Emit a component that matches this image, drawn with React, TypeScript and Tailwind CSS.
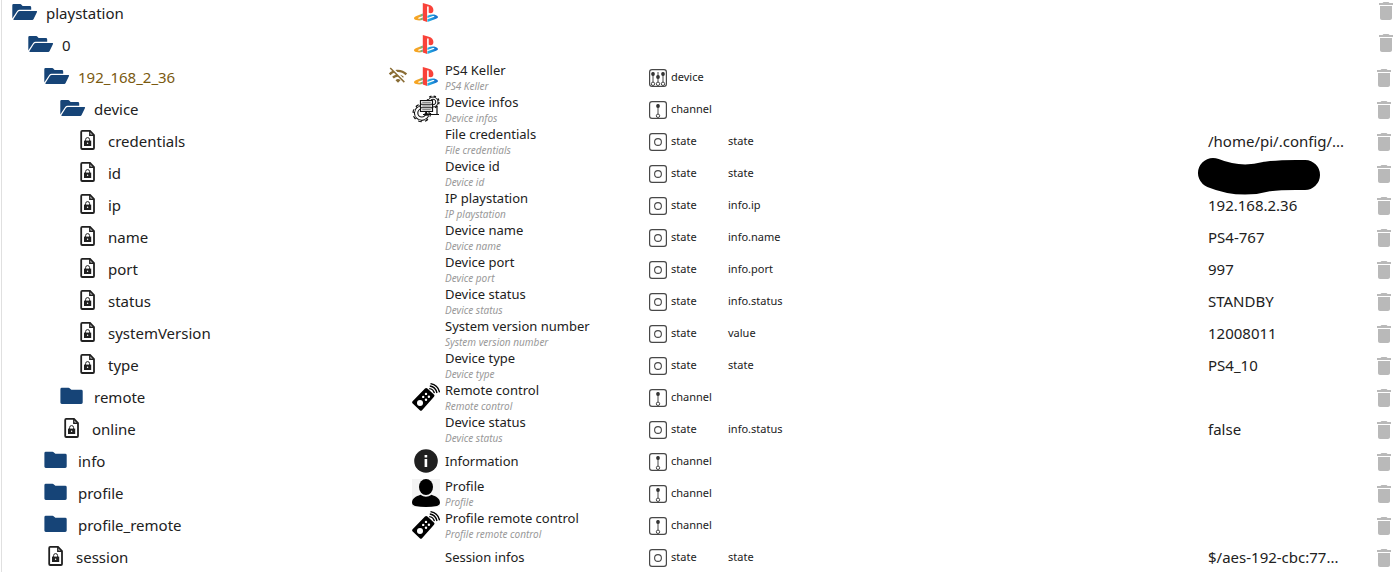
import React from 'react';
import { MdDelete, MdWifiOff } from 'react-icons/md';

type Kind = 'open' | 'closed' | 'state';
type ItemType = 'device' | 'channel' | 'state';
type Picture = 'playstation' | 'gears' | 'remote' | 'info' | 'profile';

interface Row {
  id: string;
  level: number;
  kind: Kind;
  picture?: Picture;
  offline?: boolean;
  name?: string;
  desc?: boolean;
  type?: ItemType;
  role?: string;
  value?: string;
  redacted?: boolean;
}

const rows: Row[] = [
  { id: 'playstation', level: 0, kind: 'open', picture: 'playstation' },
  { id: '0', level: 1, kind: 'open', picture: 'playstation' },
  { id: '192_168_2_36', level: 2, kind: 'open', picture: 'playstation', offline: true, name: 'PS4 Keller', desc: true, type: 'device' },
  { id: 'device', level: 3, kind: 'open', picture: 'gears', name: 'Device infos', desc: true, type: 'channel' },
  { id: 'credentials', level: 4, kind: 'state', name: 'File credentials', desc: true, type: 'state', role: 'state', value: '/home/pi/.config/...' },
  { id: 'id', level: 4, kind: 'state', name: 'Device id', desc: true, type: 'state', role: 'state', redacted: true },
  { id: 'ip', level: 4, kind: 'state', name: 'IP playstation', desc: true, type: 'state', role: 'info.ip', value: '192.168.2.36' },
  { id: 'name', level: 4, kind: 'state', name: 'Device name', desc: true, type: 'state', role: 'info.name', value: 'PS4-767' },
  { id: 'port', level: 4, kind: 'state', name: 'Device port', desc: true, type: 'state', role: 'info.port', value: '997' },
  { id: 'status', level: 4, kind: 'state', name: 'Device status', desc: true, type: 'state', role: 'info.status', value: 'STANDBY' },
  { id: 'systemVersion', level: 4, kind: 'state', name: 'System version number', desc: true, type: 'state', role: 'value', value: '12008011' },
  { id: 'type', level: 4, kind: 'state', name: 'Device type', desc: true, type: 'state', role: 'state', value: 'PS4_10' },
  { id: 'remote', level: 3, kind: 'closed', picture: 'remote', name: 'Remote control', desc: true, type: 'channel' },
  { id: 'online', level: 3, kind: 'state', name: 'Device status', desc: true, type: 'state', role: 'info.status', value: 'false' },
  { id: 'info', level: 2, kind: 'closed', picture: 'info', name: 'Information', type: 'channel' },
  { id: 'profile', level: 2, kind: 'closed', picture: 'profile', name: 'Profile', desc: true, type: 'channel' },
  { id: 'profile_remote', level: 2, kind: 'closed', picture: 'remote', name: 'Profile remote control', desc: true, type: 'channel' },
  { id: 'session', level: 2, kind: 'state', name: 'Session infos', type: 'state', role: 'state', value: '$/aes-192-cbc:77...' },
];

const indents = ['pl-3', 'pl-7', 'pl-11', 'pl-[60px]', 'pl-[76px]'];

function TreeIcon({ kind }: { kind: Kind }) {
  if (kind === 'open') {
    return (
      <svg width="26" height="18" viewBox="0 0 26 18" className="mb-0.5 shrink-0 text-[#164477]" fill="currentColor" aria-hidden="true">
        <path d="M0.3 15.5V2.2Q0.3 1 1.5 1H8.2Q9 1 9.5 1.7L10.6 3H17.8Q19.2 3 19.2 4.4V6.8H7.6Q6 6.8 5.2 8Z" />
        <path d="M7.8 8H24.3Q25.5 8 25 9.1L21.6 16.1Q21.2 17 20.2 17H2Q0.9 17 1.5 15.9L5.9 9Q6.6 8 7.8 8Z" />
      </svg>
    );
  }
  if (kind === 'closed') {
    return (
      <svg width="26" height="18" viewBox="0 0 26 18" className="mb-0.5 shrink-0 text-[#164477]" fill="currentColor" aria-hidden="true">
        <path d="M1.8 0.8H8.5Q9.3 0.8 9.9 1.4L11.4 2.8H21.2Q22.7 2.8 22.7 4.2V15.6Q22.7 17 21.2 17H1.8Q0.4 17 0.4 15.6V2.2Q0.4 0.8 1.8 0.8Z" />
      </svg>
    );
  }
  return (
    <svg width="16" height="22" viewBox="0 0 16 22" className="mr-0.5 mb-0.5 ml-1 shrink-0 text-[#202020]" fill="none" stroke="currentColor" aria-hidden="true">
      <path d="M2.2 1.9H10L14 6V19Q14 20 13 20H2.2Q1.2 20 1.2 19V2.9Q1.2 1.9 2.2 1.9Z" strokeWidth="1.8" />
      <path d="M9.8 2V6.2H14" strokeWidth="1.4" />
      <path d="M5.6 12V10.6A2 2 0 0 1 9.6 10.6V12" strokeWidth="1" />
      <path d="M4 11.6H11.2V17H4Z" fill="currentColor" stroke="none" />
      <circle cx="7.6" cy="14.2" r="0.7" fill="white" stroke="none" />
    </svg>
  );
}

function PictureIcon({ picture }: { picture: Picture }) {
  switch (picture) {
    case 'playstation':
      return (
        <svg width="28" height="28" viewBox="0 0 28 28" aria-hidden="true">
          <defs>
            <linearGradient id="psLeft" x1="0" x2="1">
              <stop offset="0" stopColor="#f9a51e" />
              <stop offset="0.6" stopColor="#f2a52a" />
              <stop offset="1" stopColor="#3ab59c" />
            </linearGradient>
            <linearGradient id="psRight" x1="0" x2="1">
              <stop offset="0" stopColor="#22b8e8" />
              <stop offset="1" stopColor="#1668c8" />
            </linearGradient>
          </defs>
          <path d="M10.8 14.4L4.4 16.9C1.4 18.1 1.2 20.1 4.2 21C6.6 21.7 8.9 21.5 10.8 20.8V18.6L8 19.5C6.4 20 5.2 19.4 6.8 18.6L10.8 17Z" fill="url(#psLeft)" />
          <path d="M15.4 16.8C18.3 15.6 21.3 15.2 23.6 16C26.7 17.1 26.6 18.8 24.2 19.7L15.4 22.9V20.3L21.8 17.9C23.2 17.4 22 16.8 20.7 17.1L15.4 19Z" fill="url(#psRight)" />
          <path d="M10.8 4.1L16.8 5.7C19.9 6.6 21.4 8.4 21.4 11C21.4 14 19.3 15 16.7 13.8V8.5C16.7 7.1 15.1 6.9 15.1 8.3V23L10.8 21.6Z" fill="#f94239" />
        </svg>
      );
    case 'gears':
      return (
        <svg width="28" height="28" viewBox="0 0 28 28" fill="none" stroke="#111" aria-hidden="true">
          <circle cx="9.8" cy="18" r="7.4" strokeWidth="1.1" />
          <circle cx="9.8" cy="18" r="8.5" strokeWidth="1.7" strokeDasharray="3.4 3.28" />
          <circle cx="9.8" cy="18" r="7.8" stroke="white" strokeWidth="1" strokeDasharray="2 4.13" strokeDashoffset="-1.2" />
          <circle cx="9.8" cy="18" r="4" strokeWidth="1.1" />
          <circle cx="21" cy="7" r="5" strokeWidth="1" />
          <circle cx="21" cy="7" r="6" strokeWidth="1.3" strokeDasharray="2.4 2.31" />
          <circle cx="21" cy="7" r="2.8" strokeWidth="1" />
          <path d="M8.5 5.5H20.5V16.5H8.5Z" fill="white" strokeWidth="1.2" />
          <path d="M8.5 9.2H20.5M8.5 12.8H20.5" strokeWidth="1.1" />
          <path d="M10.2 7.3H18.8M10.2 11H18.8M10.2 14.7H18.8" strokeWidth="1.1" stroke="#666" />
          <path d="M14.5 16.5V19.5M11 19.5H25V10.5M22.5 19.5H27" strokeWidth="1.2" />
          <path d="M12.5 18.3H16.5V20.7H12.5Z" fill="#111" stroke="none" />
        </svg>
      );
    case 'remote':
      return (
        <svg width="28" height="28" viewBox="0 0 28 28" aria-hidden="true">
          <path d="M13 5.5Q14.2 4.4 15.4 5.5L21.9 11.5Q23 12.5 22 13.7L10 27.2Q9 28.4 7.8 27.3L.7 20.6Q-.4 19.5.6 18.3Z" fill="black" />
          <circle cx="8" cy="20" r="3" fill="white" />
          <g fill="white">
            <circle cx="14" cy="10.9" r="1.2" />
            <circle cx="11.2" cy="13.9" r="1.2" />
            <circle cx="16.9" cy="13.7" r="1.2" />
            <circle cx="14" cy="16.7" r="1.2" />
          </g>
          <path d="M17.2 5.6Q21.3 5.8 22.4 10.2M17.8 3Q23.6 3.8 25 10M18.5.6Q26 1.8 27.6 9.4" fill="none" stroke="black" strokeWidth="1.3" />
        </svg>
      );
    case 'info':
      return (
        <svg width="28" height="28" viewBox="0 0 28 28" aria-hidden="true">
          <circle cx="14" cy="14" r="11.8" fill="#202020" />
          <path d="M12.6 8H15.2V10.6H12.6ZM12.6 12H15.2V20H12.6Z" fill="white" />
        </svg>
      );
    case 'profile':
      return (
        <svg width="28" height="28" viewBox="0 0 28 28" aria-hidden="true">
          <path d="M0 0H28V28H0Z" fill="#f3f3f3" />
          <ellipse cx="14" cy="8" rx="7" ry="8" fill="black" />
          <path d="M0 24C0 19 4 17.6 8.5 15.8Q14 19.8 19.5 15.8C24 17.6 28 19 28 24Q28 26 25 27Q14 29 3 27Q0 26 0 24Z" fill="black" />
        </svg>
      );
  }
}

function TypeIcon({ type }: { type: ItemType }) {
  const slider = (x: number, y: number) => (
    <g key={x}>
      <path d={`M${x} 3V14`} strokeWidth="1" />
      <circle cx={x} cy={y} r="1.9" fill="#333" stroke="none" />
      <circle cx={x} cy="14.8" r="1.7" fill="white" strokeWidth="1" />
    </g>
  );
  return (
    <svg width="18" height="18" viewBox="0 0 18 18" fill="none" stroke="#484848" className="mt-0.5 shrink-0" aria-hidden="true">
      <rect x="0.6" y="0.6" width="16.8" height="16.8" rx="2.4" strokeWidth="1.2" />
      {type === 'state' && <circle cx="9" cy="9" r="3.4" strokeWidth="1.1" />}
      {type === 'channel' && slider(9, 5)}
      {type === 'device' && [slider(4, 5), slider(9, 8), slider(14, 5)]}
    </svg>
  );
}

export default function App() {
  return (
    <main className="h-screen overflow-hidden bg-white pl-px font-['Noto_Sans',sans-serif] text-[#212121]">
      <div className="border-l border-[#e0e0e0]">
        <table className="-mt-[3px] w-full table-fixed border-collapse text-left">
          <colgroup>
            <col className="w-[386px]" />
            <col className="w-[261px]" />
            <col className="w-[79px]" />
            <col />
            <col className="w-[164px]" />
            <col className="w-[26px]" />
          </colgroup>
          <tbody>
            {rows.map((row, i) => (
              <tr key={row.id} className="h-8">
                <td className="p-0">
                  <div className={`-ml-0.5 flex h-8 items-center ${indents[row.level]}`}>
                    <TreeIcon kind={row.kind} />
                    <span className={`text-[15px] leading-5 ${row.kind === 'state' ? 'pl-2.5' : 'pl-2'} ${row.offline ? 'text-[#7a5a10]' : ''}`}>{row.id}</span>
                  </div>
                </td>
                <td className="p-0">
                  <div className="flex h-8 items-center">
                    <div className="flex w-6 shrink-0 pb-0.5">
                      {row.offline && <MdWifiOff size={20} className="text-[#8a6d35]" aria-label="Offline" />}
                    </div>
                    <div className="mr-[5px] w-7 shrink-0">{row.picture && <PictureIcon picture={row.picture} />}</div>
                    <div className="whitespace-nowrap">
                      <div className="text-[13px] leading-[18px]">{row.name}</div>
                      {row.desc && <div className="text-[10px] leading-[14px] text-[#999999] italic">{row.name}</div>}
                    </div>
                  </div>
                </td>
                <td className="p-0">
                  {row.type && (
                    <div className="flex h-8 items-center gap-1 text-[11px]">
                      <TypeIcon type={row.type} />
                      {row.type}
                    </div>
                  )}
                </td>
                <td className="p-0 text-[11px]">{row.role}</td>
                <td className="p-0 text-[15px] leading-5 whitespace-nowrap">
                  {row.redacted ? (
                    <svg width="124" height="32" viewBox="0 0 124 32" className="-ml-[11px] overflow-visible" aria-label="Hidden value">
                      <path d="M16 16Q43 27 70 19.5Q84 17.5 108 18" fill="none" stroke="black" strokeWidth="30" strokeLinecap="round" />
                    </svg>
                  ) : (
                    row.value
                  )}
                </td>
                <td className="p-0">
                  <button type="button" aria-label={`Delete ${row.id}`} className={`flex h-8 items-center text-[#b9b9b9] ${i < 2 ? 'pb-1 pl-0.5' : 'pt-0.5'}`}>
                    <MdDelete size={24} />
                  </button>
                </td>
              </tr>
            ))}
          </tbody>
        </table>
      </div>
    </main>
  );
}
